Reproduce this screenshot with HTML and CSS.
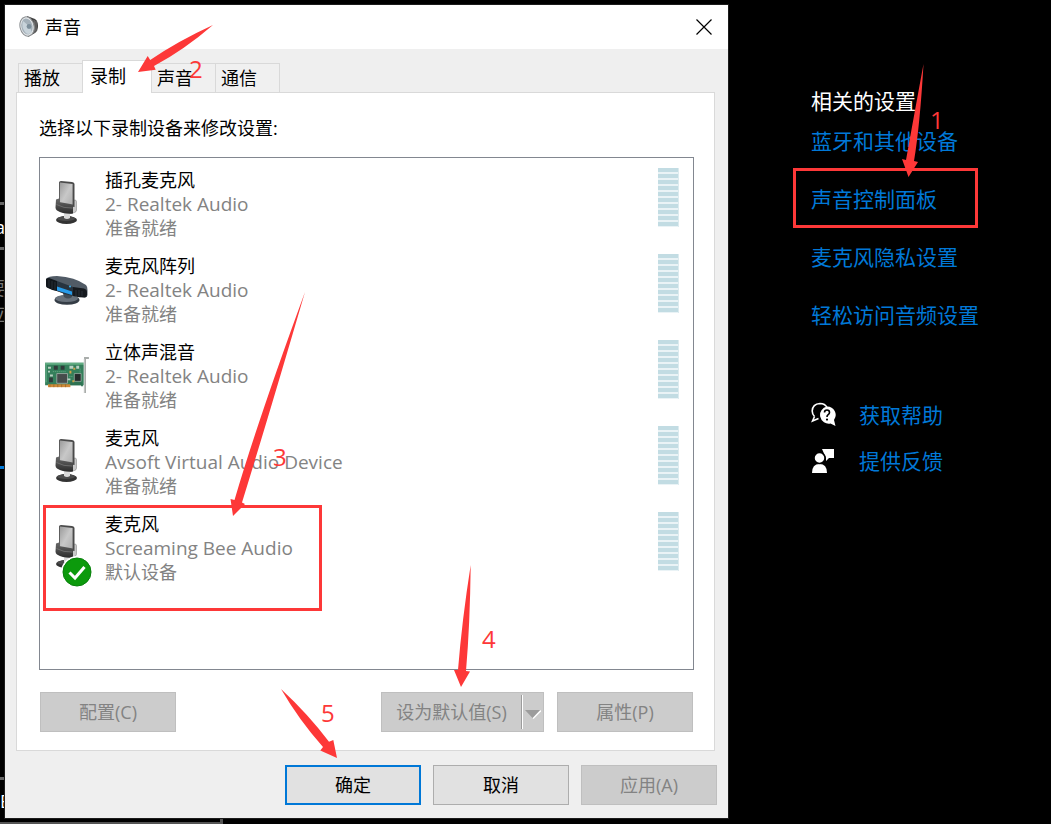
FILE: index.html
```html
<!DOCTYPE html>
<html lang="zh-CN">
<head>
    <meta charset="UTF-8">
    <meta name="viewport" content="width=device-width, initial-scale=1.0">
    <title>声音</title>
    <link rel="stylesheet" href="styles.css">
</head>
<body>
    <!-- Окно настроек, видимое из-под диалога -->
    <div class="backdrop" aria-hidden="true">
        <span class="edge edge-1"></span>
        <span class="edge edge-2"></span>
        <span class="edge edge-3"></span>
        <span class="edge edge-4"></span>
        <span class="edge-box"></span>
        <span class="peek peek-1">a</span>
        <span class="peek peek-2">要</span>
        <span class="peek peek-3">应</span>
        <span class="peek peek-4">E</span>
    </div>

    <svg class="symbols" aria-hidden="true">
        <defs>
            <linearGradient id="micFace" x1="0" y1="0" x2="1" y2="1">
                <stop offset="0" stop-color="#9a9a9a"/>
                <stop offset="0.5" stop-color="#c8c8c8"/>
                <stop offset="1" stop-color="#acacac"/>
            </linearGradient>
            <linearGradient id="micBody" x1="0" y1="0" x2="0" y2="1">
                <stop offset="0" stop-color="#6a6a6a"/>
                <stop offset="1" stop-color="#2c2c2c"/>
            </linearGradient>
        </defs>
        <symbol id="mic" viewBox="1 0 44 44">
            <ellipse cx="22.500" cy="39" rx="10.500" ry="4" fill="#333"/>
            <ellipse cx="22" cy="37.600" rx="9" ry="2.400" fill="#4c4c4c"/>
            <path d="M20 29h6v8q-3 2-6 0z" fill="#d9d9d9"/>
            <path d="M27 20l4-1q1.500 0 1.500 2v8q0 2-2 2.500l-4 1z" fill="#c9c9c9" stroke="#8c8c8c" stroke-width=".6"/>
            <path d="M15 1.500q0-1.500 2-1.500l11 1q2.500 .3 2.500 2V26l-15.500-2z" fill="#4a4a4a"/>
            <path d="M15.800 1.500l12.800 1.500V25l-12.800-1.500z" fill="url(#micFace)"/>
            <path d="M12 18.500l3-1v3.500l14 2.500V32.500q-9 1-16-3-1.500-1-1.500-3z" fill="url(#micBody)"/>
            <path d="M12.500 23.500q7 4 16 3.500" fill="none" stroke="#7b7b7b" stroke-width=".7"/>
        </symbol>
        <symbol id="array" viewBox="0 0 44 30">
            <ellipse cx="22" cy="24" rx="12.500" ry="4.800" fill="#343c45"/>
            <ellipse cx="21.500" cy="22.500" rx="11.500" ry="3.500" fill="#68717b"/>
            <path d="M17 14h10v7q-4 3-8 0z" fill="#414c56"/>
            <path d="M1 3Q3 0 12 0q18 1 29 9 1.500 1.500 1.500 5v5q0 2-2.500 2.500Q21 19 3 12 1 11.500 1 9z" fill="#515b66"/>
            <path d="M1 3q1-1 3-1l8 3v10Q6 14 2 11.500 1 11 1 9z" fill="#11161b"/>
            <path d="M12 5l16 6v9q-9-1.500-16-5z" fill="#27333f"/>
            <path d="M28 11l11 1.500q3 1 3 3v3q0 2.500-2.500 3-5 0-11.500-1.500z" fill="#15191e"/>
            <path d="M12 10.500l15 5v3.500l-15-4.500z" fill="#279bea"/>
            <circle cx="25" cy="10.500" r="1" fill="#39b1f0"/>
            <path d="M4 4v7M7 5v8M10 6v8M31 14v6M34 14v6M37 15v5" stroke="#394149" stroke-width=".6"/>
        </symbol>
        <symbol id="card" viewBox="0 0 45 38">
            <path d="M0 6h40v23H0z" fill="#347f5b"/>
            <path d="M0 6h40v2H0z" fill="#62ad83"/>
            <path d="M1 8v18" stroke="#6bb48c"/>
            <path d="M3 28h23v3H3z" fill="#d18a37"/>
            <path d="M5 28v3M9 28v3M13 28v3M17 28v3M21 28v3" stroke="#8d622c" stroke-width=".7"/>
            <path d="M26 25l12 1 1 4H37v-1H26z" fill="#2d7252"/>
            <path d="M12 17h11v10H12z" fill="#464c4b" stroke="#a8b4ac" stroke-width=".8"/>
            <path d="M30 17h7v8h-7z" fill="#252b2b" stroke="#adbbb2" stroke-width=".7"/>
            <path d="M9 9h4v4H9zM16 9h4v4h-4zM4 21h4v5H4z" fill="#303b3a"/>
            <path d="M3 10h3v2H3zM5 18h3v2H5zM3 14h2v2H3zM25 9h4v3h-4zM32 9h3v3h-3zM23 22h3v2h-3z" fill="#b9d0c2"/>
            <path d="M25 14h2v3h-2zM29 11h2v2h-2zM28 24h2v2h-2z" fill="#d2a448"/>
            <path d="M8 15h14M25 20h4M36 12v5" stroke="#76b08e" stroke-width=".8" stroke-dasharray="1 1"/>
            <path d="M41 37V1h4" fill="none" stroke="#a9adab" stroke-width="2"/>
            <path d="M40 2v35" stroke="#e1e3e2" stroke-width=".8"/>
        </symbol>
    </svg>

    <main class="dialog">
        <header class="title-bar">
            <svg class="title-icon" viewBox="0 0 20 22" aria-hidden="true">
                <path d="M8 0l8 3q3 2 3 7t-3 7l-7 4z" fill="#424242"/>
                <path d="M15 4l1 13M17 5v10" stroke="#858585" stroke-width=".8"/>
                <ellipse cx="8" cy="10.500" rx="7" ry="9.800" transform="rotate(-12 8 10.500)" fill="#e7eaec" stroke="#8c9093"/>
                <ellipse cx="8" cy="10.500" rx="5.600" ry="8.200" transform="rotate(-12 8 10.500)" fill="#a4b0b9"/>
                <path d="M4 5l6 5 3 6q-4 4-7 0-4-5-2-11z" fill="#c8d3da"/>
                <circle cx="10" cy="10.500" r="2.400" fill="#7c8e9a"/>
            </svg>
            <h1 class="title">声音</h1>
            <button class="close-btn" type="button" aria-label="关闭">
                <svg viewBox="0 0 16 16" aria-hidden="true"><path d="M.5.5l15 15M15.500.5l-15 15" stroke="#000" stroke-width="1.200"/></svg>
            </button>
        </header>

        <div class="content">
            <div class="tabs" role="tablist">
                <button class="tab" type="button" role="tab">播放</button>
                <button class="tab active" type="button" role="tab" aria-selected="true">录制</button>
                <button class="tab" type="button" role="tab">声音</button>
                <button class="tab" type="button" role="tab">通信</button>
            </div>

            <section class="panel">
                <p class="hint">选择以下录制设备来修改设置:</p>

                <ul class="devices">
                    <li class="device">
                        <svg class="device-icon"><use href="#mic"/></svg>
                        <div class="device-text">
                            <div class="device-name">插孔麦克风</div>
                            <div class="device-driver">2- Realtek Audio</div>
                            <div>准备就绪</div>
                        </div>
                        <div class="meter"></div>
                    </li>
                    <li class="device">
                        <svg class="device-icon array-icon"><use href="#array"/></svg>
                        <div class="device-text">
                            <div class="device-name">麦克风阵列</div>
                            <div class="device-driver">2- Realtek Audio</div>
                            <div>准备就绪</div>
                        </div>
                        <div class="meter"></div>
                    </li>
                    <li class="device">
                        <svg class="device-icon card-icon"><use href="#card"/></svg>
                        <div class="device-text">
                            <div class="device-name">立体声混音</div>
                            <div class="device-driver">2- Realtek Audio</div>
                            <div>准备就绪</div>
                        </div>
                        <div class="meter"></div>
                    </li>
                    <li class="device">
                        <svg class="device-icon"><use href="#mic"/></svg>
                        <div class="device-text">
                            <div class="device-name">麦克风</div>
                            <div class="device-driver">Avsoft Virtual Audio Device</div>
                            <div>准备就绪</div>
                        </div>
                        <div class="meter"></div>
                    </li>
                    <li class="device">
                        <svg class="device-icon"><use href="#mic"/></svg>
                        <svg class="badge" viewBox="0 0 32 32" aria-hidden="true">
                            <circle cx="16" cy="16" r="16" fill="#fff"/>
                            <circle cx="16" cy="16" r="14" fill="#0c9a0c" stroke="#08800b"/>
                            <path d="M8.500 16.500l5.500 5.500 9.500-11" fill="none" stroke="#fff" stroke-width="3"/>
                        </svg>
                        <div class="device-text">
                            <div class="device-name">麦克风</div>
                            <div class="device-driver">Screaming Bee Audio</div>
                            <div>默认设备</div>
                        </div>
                        <div class="meter"></div>
                    </li>
                </ul>

                <div class="panel-actions">
                    <button class="btn" type="button" disabled>配置(C)</button>
                    <div class="split">
                        <button class="btn split-main" type="button" disabled>设为默认值(S)</button>
                        <button class="btn split-arrow" type="button" aria-label="更多" disabled>
                            <svg viewBox="0 0 16 9" aria-hidden="true">
                                <path d="M8 8.500L16 .5" stroke="#fff" stroke-width="1.500"/>
                                <path d="M0 0h15L7.500 8z" fill="#9c9c9c"/>
                            </svg>
                        </button>
                    </div>
                    <button class="btn" type="button" disabled>属性(P)</button>
                </div>
            </section>
        </div>

        <footer class="dialog-actions">
            <button class="btn primary" type="button">确定</button>
            <button class="btn" type="button">取消</button>
            <button class="btn" type="button" disabled>应用(A)</button>
        </footer>
    </main>

    <aside class="related">
        <h2 class="related-title">相关的设置</h2>
        <nav class="links">
            <a href="#">蓝牙和其他设备</a>
            <a href="#">声音控制面板</a>
            <a href="#">麦克风隐私设置</a>
            <a href="#">轻松访问音频设置</a>
        </nav>
        <nav class="help">
            <a href="#">
                <svg class="help-icon" viewBox="0 0 26 26" aria-hidden="true">
                    <path d="M3.500 14.500Q1.200 12 1.200 9 1.500 2 9 1.500q5 0 7 4M3.500 14.500L1.500 19l6-2.500" fill="none" stroke="#fff" stroke-width="1.600"/>
                    <path d="M16 4.500a8.500 8.500 0 0 1 7 13.500l1.500 6-5-2.500A8.500 8.500 0 1 1 16 4.500z" fill="#fff"/>
                    <path d="M13.500 10.500q0-2.500 2.500-2.500t2.500 2.500q0 1.300-1.300 2.200T16 15" fill="none" stroke="#000" stroke-width="1.600"/>
                    <circle cx="16" cy="17.600" r="1.100"/>
                </svg>
                <span>获取帮助</span>
            </a>
            <a href="#">
                <svg class="help-icon" viewBox="0 0 26 26" aria-hidden="true">
                    <path d="M11 1h12v9h-5l-3 3v-3" fill="#fff"/>
                    <path d="M1 25q0-9 7.500-9t7.500 9z" fill="#fff"/>
                    <circle cx="8.500" cy="10" r="5.500" fill="#fff" stroke="#000" stroke-width="1.500"/>
                </svg>
                <span>提供反馈</span>
            </a>
        </nav>
    </aside>

    <!-- Пометки поверх окон: стрелки, рамки и номера шагов -->
    <svg class="marks" width="1051" height="824" viewBox="0 0 1051 824" aria-hidden="true">
        <path d="M923.500 64Q920 125 914 161l4 1-9.500 15-6.500-18 4 1Q915 110 923.500 64z"/>
        <path d="M213 25Q184 50 154 66l1.700 3.700L138 72l9.700-16 2.500 4Q178 41 213 25z"/>
        <path d="M305 292Q269 415 242 502.500l3 1.500-12 12-2.500-17 4 1Q258 420 305 292z"/>
        <path d="M470.700 565Q470 625 466 671l4 .5-9 15.500-7-17h4Q462 620 470.700 565z"/>
        <path d="M281 689Q308 714 329 741.700l4.300-1.700 3.700 18-16.700-7.500 2.700-3.500Q299 720 281 689z"/>
        <rect x="794.500" y="169.500" width="182" height="57"/>
        <rect x="44.500" y="506.500" width="276" height="103"/>
        <text x="930" y="129">1</text>
        <text x="189" y="78">2</text>
        <text x="273" y="466">3</text>
        <text x="482" y="648">4</text>
        <text x="321" y="722">5</text>
    </svg>
</body>
</html>
```
FILE: styles.css
```css
* {
    margin: 0;
    padding: 0;
    box-sizing: border-box;
}

body {
    position: relative;
    display: flex;
    min-height: 100vh;
    padding: 5px 0 6px 5px;
    background: #000;
    color: #000;
    font-family: "Open Sans", "Noto Sans CJK SC", sans-serif;
    font-size: 18px;
    line-height: 24px;
    overflow-x: hidden;
}

button {
    font: inherit;
    color: inherit;
}

.symbols {
    position: absolute;
    width: 0;
    height: 0;
}

/* Фон под диалогом */
.backdrop {
    position: absolute;
    inset: 0;
    overflow: hidden;
}

.edge,
.edge-box,
.peek {
    position: absolute;
}

.edge {
    left: 0;
    width: 5px;
    height: 3px;
    background: #666;
}

.edge-1 { top: 202px; }
.edge-2 { top: 247px; }
.edge-3 { top: 466px; background: #0078d7; }
.edge-4 { top: 777px; }

.edge-box {
    left: 0;
    bottom: 0;
    width: 223px;
    height: 10px;
    border-right: 3px solid #555;
    border-bottom: 2px solid #555;
}

.peek {
    color: #fff;
    right: calc(100% - 5px);
}

.peek-1 { top: 215px; }
.peek-2 { top: 276px; color: #777; }
.peek-3 { top: 302px; color: #777; }
.peek-4 { top: 789px; right: auto; left: 0; }

/* Диалог */
.dialog {
    position: relative;
    flex: 1;
    display: flex;
    flex-direction: column;
    background: #efefef;
    box-shadow: 0 0 0 1px #1c1c1c;
}

.title-bar {
    display: flex;
    align-items: center;
    height: 44px;
    padding: 0 16px 0 14px;
    background: #fff;
}

.title-icon {
    width: 20px;
    height: 22px;
}

.title {
    flex: 1;
    margin-left: 6px;
    font-size: 18px;
    font-weight: normal;
}

.close-btn {
    width: 16px;
    height: 16px;
    border: none;
    background: none;
}

.close-btn svg {
    display: block;
}

.content {
    flex: 1;
    display: flex;
    flex-direction: column;
    padding: 11px 13px 0 11px;
}

.tabs {
    display: flex;
    align-items: flex-end;
    padding-left: 2px;
}

.tab {
    height: 29px;
    width: 65px;
    padding-left: 5px;
    border: 1px solid #d9d9d9;
    border-bottom: none;
    margin-right: -1px;
    background: #f0f0f0;
    text-align: left;
}

.tab.active {
    position: relative;
    width: 70px;
    height: 33px;
    margin-bottom: -1px;
    padding: 0 0 3px 7px;
    background: #fff;
}

.panel {
    flex: 1;
    display: flex;
    flex-direction: column;
    padding: 23px 20px 18px 22px;
    border: 1px solid #d9d9d9;
    background: #fff;
}

.hint {
    margin-bottom: 17px;
}

.devices {
    flex: 1;
    display: flex;
    flex-direction: column;
    gap: 14px;
    padding: 10px 14px 10px 5px;
    border: 1px solid #828790;
    list-style: none;
}

.device {
    position: relative;
    display: flex;
    align-items: flex-start;
}

.device-icon {
    width: 44px;
    height: 44px;
    margin-top: 13px;
}

.array-icon {
    height: 30px;
    margin-top: 22px;
}

.card-icon {
    height: 37px;
    margin-top: 17px;
}

.badge {
    position: absolute;
    left: 16px;
    top: 44px;
    width: 32px;
    height: 32px;
}

.device-text {
    flex: 1;
    margin-left: 16px;
    color: #838383;
}

.device-name {
    color: #000;
}

.device-driver {
    font-size: 19px;
}

.meter {
    width: 21px;
    height: 59px;
    border-right: 1px solid #dcebef;
    background: repeating-linear-gradient(#c2dce3 0 4px, #eaf3f6 4px 6px);
}

.panel-actions {
    display: flex;
    gap: 13px;
    margin: 22px 1px 0;
}

.btn {
    width: 136px;
    height: 40px;
    border: 1px solid #adadad;
    background: #e1e1e1;
}

.btn:disabled {
    border-color: #bfbfbf;
    background: #ccc;
    color: #838383;
}

.primary {
    border: 2px solid #0078d7;
}

.split {
    display: flex;
    margin-left: auto;
    border: 1px solid #bfbfbf;
    background: #ccc;
}

.split .btn {
    height: 38px;
    border: none;
}

.split .split-main {
    width: 139px;
}

.split .split-arrow {
    width: 22px;
    height: 34px;
    margin: 2px 0;
    border-left: 1px solid #9c9c9c;
    box-shadow: inset 1px 0 #fff;
}

.split-arrow svg {
    width: 16px;
    height: 9px;
    vertical-align: middle;
}

.dialog-actions {
    display: flex;
    justify-content: flex-end;
    gap: 12px;
    padding: 14px 11px 13px;
}

/* Ссылки справа */
.related {
    position: relative;
    flex: 0 0 323px;
    padding: 82px 0 0 83px;
    font-size: 21px;
    line-height: 28px;
}

.related-title {
    margin-bottom: 12px;
    color: #fff;
    font-size: 21px;
    font-weight: normal;
}

.related a {
    color: #0078d7;
    text-decoration: none;
}

.links {
    display: flex;
    flex-direction: column;
    align-items: flex-start;
    gap: 30px;
    margin-bottom: 72px;
}

.help {
    display: flex;
    flex-direction: column;
    gap: 18px;
}

.help a {
    display: flex;
    align-items: center;
    gap: 22px;
}

.help-icon {
    width: 26px;
    height: 26px;
}

/* Пометки */
.marks {
    position: absolute;
    left: 0;
    top: 0;
    fill: #fd3838;
    font-size: 24px;
    pointer-events: none;
}

.marks rect {
    fill: none;
    stroke: #fd3838;
    stroke-width: 3px;
}
```
